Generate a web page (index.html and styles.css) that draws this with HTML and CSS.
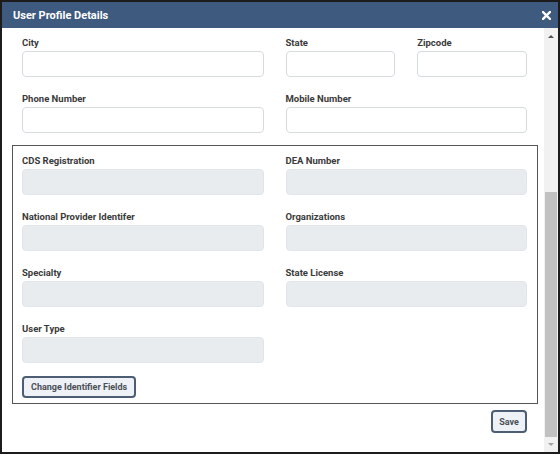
FILE: index.html
```html
<!DOCTYPE html>
<html>
  <head>
    <meta charset="UTF-8">
    <title>User Profile Details</title>
    <link rel="stylesheet" href="styles.css">
  </head>
  <body>
    <div class="dialog">
        <div class="dialog-header">
            <span class="dialog-title">User Profile Details</span>
            <span class="close">
                <svg width="9" height="9" viewBox="0 0 9 9">
                    <path d="M1 1 L8 8 M8 1 L1 8" stroke="#fff" stroke-width="2.4" stroke-linecap="square" />
                </svg>
            </span>
        </div>
        <div class="dialog-body">
            <div class="scroll-content">
                <div class="grid top">
                    <div class="field">
                        <label for="city">City</label>
                        <input type="text" id="city" />
                    </div>
                    <div class="pair">
                        <div class="field">
                            <label for="state">State</label>
                            <input type="text" id="state" />
                        </div>
                        <div class="field">
                            <label for="zip">Zipcode</label>
                            <input type="text" id="zip" />
                        </div>
                    </div>
                    <div class="field">
                        <label for="phone">Phone Number</label>
                        <input type="text" id="phone" />
                    </div>
                    <div class="field">
                        <label for="mobile">Mobile Number</label>
                        <input type="text" id="mobile" />
                    </div>
                </div>

                <div class="identifiers">
                    <div class="grid">
                        <div class="field">
                            <label for="cds">CDS Registration</label>
                            <input type="text" id="cds" disabled />
                        </div>
                        <div class="field">
                            <label for="dea">DEA Number</label>
                            <input type="text" id="dea" disabled />
                        </div>
                        <div class="field">
                            <label for="npi">National Provider Identifer</label>
                            <input type="text" id="npi" disabled />
                        </div>
                        <div class="field">
                            <label for="orgs">Organizations</label>
                            <input type="text" id="orgs" disabled />
                        </div>
                        <div class="field">
                            <label for="specialty">Specialty</label>
                            <input type="text" id="specialty" disabled />
                        </div>
                        <div class="field">
                            <label for="license">State License</label>
                            <input type="text" id="license" disabled />
                        </div>
                        <div class="field">
                            <label for="usertype">User Type</label>
                            <input type="text" id="usertype" disabled />
                        </div>
                    </div>
                    <button class="btn" id="changeIds">Change Identifier Fields</button>
                </div>

                <div class="footer">
                    <button class="btn" id="save">Save</button>
                </div>
            </div>
            <div class="scrollbar">
                <div class="arrow up"></div>
                <div class="track">
                    <div class="thumb"></div>
                </div>
                <div class="arrow down"></div>
            </div>
        </div>
    </div>
  </body>
</html>
```

FILE: styles.css
```css
body {
    margin: 0;
    padding: 0;
    background-color: #fff;
    font-family: Roboto, "Liberation Sans", sans-serif;
}

.dialog {
    width: 560px;
    height: 454px;
    box-sizing: border-box;
    border: 2px solid #1c1c1c;
    display: flex;
    flex-direction: column;
    background: #fff;
}

.dialog-header {
    height: 26px;
    flex: none;
    background-color: #3e5a7e;
    display: flex;
    align-items: center;
    justify-content: space-between;
    padding: 0 6px 0 11px;
}

.dialog-title {
    color: #fff;
    font-size: 11px;
    font-weight: bold;
}

.close {
    display: flex;
    margin-right: 1px;
}

.dialog-body {
    flex: 1;
    display: flex;
    min-height: 0;
}

.scroll-content {
    flex: 1;
    min-width: 0;
    padding: 8px 6px 0 10px;
}

.grid {
    display: grid;
    grid-template-columns: minmax(0, 1fr) minmax(0, 1fr);
    column-gap: 22px;
    row-gap: 15px;
}

.top {
    padding: 0 11px 0 10px;
}

.pair {
    display: grid;
    grid-template-columns: minmax(0, 1fr) minmax(0, 1fr);
    column-gap: 22px;
}

.field {
    display: flex;
    flex-direction: column;
    min-width: 0;
}

label {
    font-size: 9.5px;
    line-height: 13px;
    font-weight: bold;
    color: #3a3a3a;
    margin-bottom: 2px;
}

input[type="text"] {
    width: 100%;
    height: 26px;
    box-sizing: border-box;
    border: 1px solid #d6dbe0;
    border-radius: 4px;
    background: #fff;
    margin: 0;
    padding: 0 8px;
}

input[type="text"]:disabled {
    background: #e9ecef;
    border-color: #e1e5e9;
}

.identifiers {
    margin-top: 12px;
    border: 1px solid #555;
    padding: 8px 10px 5px 9px;
}

.btn {
    margin: 0;
    height: 22px;
    padding: 0 7px;
    border: 2px solid #4d5e74;
    border-radius: 4px;
    background: #eef1f6;
    color: #4a4f57;
    font-family: Roboto, "Liberation Sans", sans-serif;
    font-size: 9px;
    font-weight: bold;
}

#changeIds {
    margin-top: 13px;
}

#save {
    height: 23px;
    width: 36px;
    padding: 0;
}

.footer {
    display: flex;
    justify-content: flex-end;
    padding: 6px 11px 0 0;
}

.scrollbar {
    width: 14px;
    flex: none;
    background: #f1f1f1;
    display: flex;
    flex-direction: column;
}

.arrow {
    height: 17px;
    flex: none;
    display: flex;
    align-items: center;
    justify-content: center;
}

.arrow.down {
    height: 15px;
}

.arrow::before {
    content: "";
    border-left: 3px solid transparent;
    border-right: 3px solid transparent;
}

.arrow.up::before {
    border-bottom: 3px solid #505050;
}

.arrow.down::before {
    border-top: 3px solid #a3a3a3;
}

.track {
    flex: 1;
    display: flex;
    flex-direction: column;
    justify-content: flex-end;
}

.thumb {
    height: 245px;
    margin: 0 1px;
    background: #c1c1c1;
}
```
